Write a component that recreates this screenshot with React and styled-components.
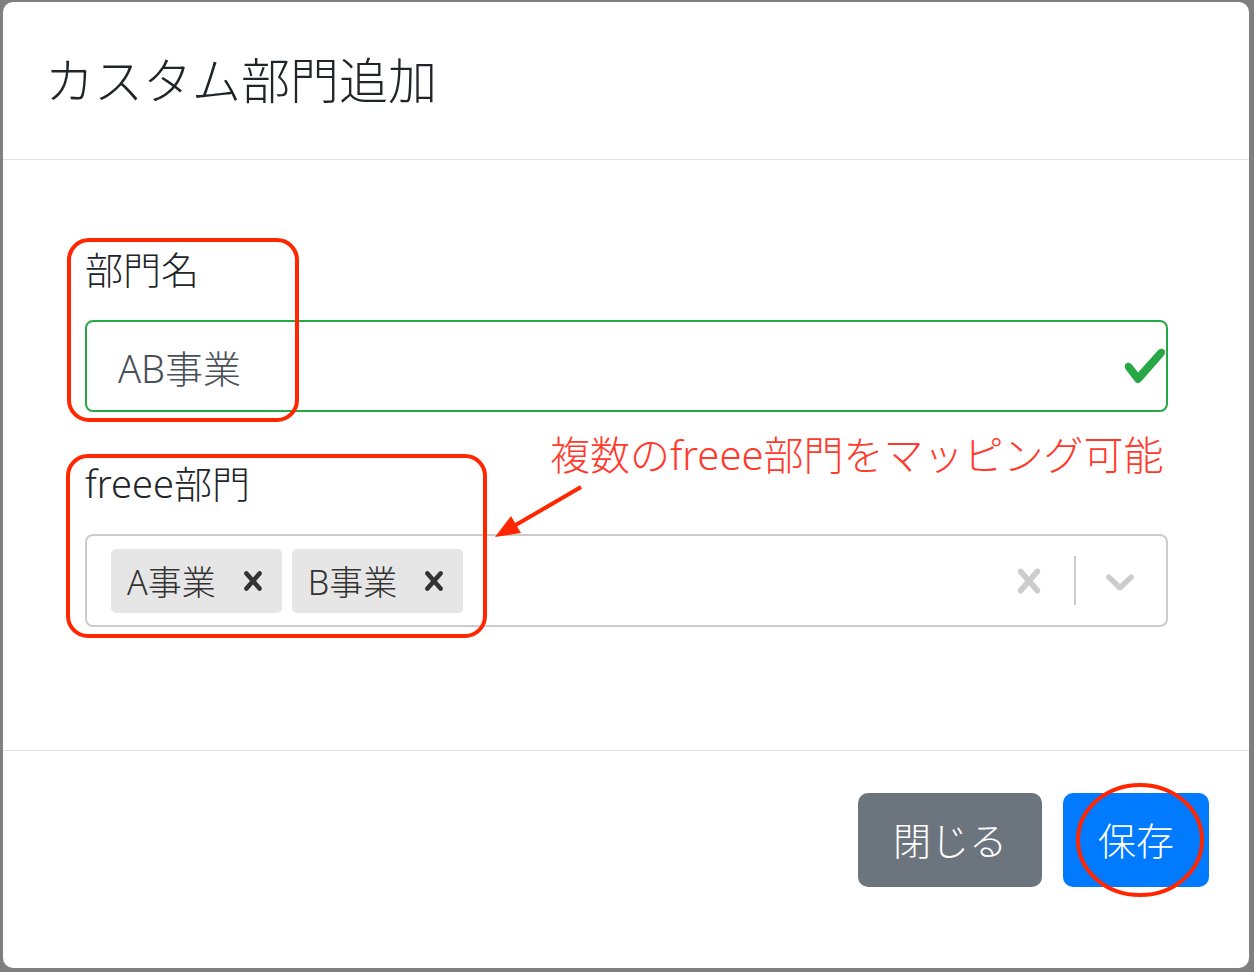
import styled, { createGlobalStyle } from "styled-components";

const GlobalStyle = createGlobalStyle`
  html, body {
    margin: 0;
    padding: 0;
  }
  body {
    background: #7f7f7f;
    font-family: "Noto Sans", "Noto Sans CJK JP", sans-serif;
    font-weight: 300;
    color: #212529;
  }
`;

const Page = styled.div`
  position: relative;
  width: 1254px;
  height: 972px;
  overflow: hidden;
`;

const Modal = styled.div`
  box-sizing: border-box;
  margin: 2px 0 0 3px;
  width: 1246px;
  height: 966px;
  background: #fff;
  border-radius: 10px;
  display: flex;
  flex-direction: column;
`;

const Header = styled.div`
  box-sizing: border-box;
  height: 158px;
  padding-left: 42px;
  display: flex;
  align-items: center;
  border-bottom: 1px solid #dee2e6;
`;

const Title = styled.h5`
  margin: 0;
  font-size: 49px;
  font-weight: 300;
  line-height: 1.2;
  color: #212529;
`;

const Body = styled.div`
  box-sizing: border-box;
  height: 590px;
  padding: 81px 81px 0 82px;
`;

const FormGroup = styled.div`
  margin-bottom: ${(p) => p.$gap || 0}px;
`;

const Label = styled.div`
  font-size: 38px;
  line-height: 57px;
  margin-bottom: 22px;
  color: #212529;
`;

const InputBox = styled.div`
  box-sizing: border-box;
  height: 92px;
  border: 2px solid #28a745;
  border-radius: 8px;
  padding: 0 0 0 31px;
  display: flex;
  align-items: center;
  justify-content: space-between;
  font-size: 38px;
  color: #495057;

  svg {
    margin-right: -2px;
  }
`;

const SelectBox = styled.div`
  box-sizing: border-box;
  height: 93px;
  border: 2px solid #cccccc;
  border-radius: 8px;
  padding-left: 24px;
  display: flex;
  align-items: center;
`;

const ValueList = styled.div`
  flex: 1;
  display: flex;
  gap: 10px;
`;

const Chip = styled.div`
  box-sizing: border-box;
  height: 64px;
  display: flex;
  align-items: center;
  background: #e6e6e6;
  border-radius: 5px;
  padding-left: 16px;
  font-size: 34px;
  color: #333;
`;

const ChipRemove = styled.span`
  display: flex;
  align-items: center;
  padding: 0 10px 0 18px;
  color: #333;
`;

const Indicator = styled.span`
  display: flex;
  align-items: center;
  padding: 0 ${(p) => p.$right || 21}px 0 ${(p) => p.$left || 21}px;
  color: #cccccc;
`;

const Separator = styled.span`
  width: 2px;
  height: 49px;
  background: #cccccc;
`;

const Footer = styled.div`
  box-sizing: border-box;
  flex: 1;
  border-top: 1px solid #dee2e6;
  display: flex;
  justify-content: flex-end;
  align-items: flex-start;
  gap: 21px;
  padding: 42px 40px 0 0;
`;

const Button = styled.button`
  box-sizing: border-box;
  height: 94px;
  padding: 0 ${(p) => p.$pad || 35}px;
  border: none;
  border-radius: 10px;
  background: ${(p) => (p.$primary ? "#007bff" : "#6c757d")};
  color: #fff;
  font-family: inherit;
  font-weight: 300;
  font-size: 38px;
  line-height: 1;
`;

const Markup = styled.svg`
  position: absolute;
  left: 0;
  top: 0;
  pointer-events: none;
`;

const Note = styled.div`
  position: absolute;
  left: 550px;
  top: 431px;
  font-size: 40px;
  line-height: 48px;
  color: #ff3a2c;
  white-space: nowrap;
`;

const Cross = ({ size, color }) => (
  <svg width={size} height={size} viewBox="0 0 20 20" fill={color}>
    <path d="M14.348 14.849c-0.469 0.469-1.229 0.469-1.697 0l-2.651-3.030-2.651 3.029c-0.469 0.469-1.229 0.469-1.697 0-0.469-0.469-0.469-1.229 0-1.697l2.758-3.15-2.759-3.152c-0.469-0.469-0.469-1.228 0-1.697s1.228-0.469 1.697 0l2.652 3.031 2.651-3.031c0.469-0.469 1.228-0.469 1.697 0s0.469 1.229 0 1.697l-2.758 3.152 2.758 3.15c0.469 0.469 0.469 1.229 0 1.698z" />
  </svg>
);

const Chevron = () => (
  <svg width="48" height="48" viewBox="0 0 20 20" fill="#cccccc">
    <path d="M4.516 7.548c0.436-0.446 1.043-0.481 1.576 0l3.908 3.747 3.908-3.747c0.533-0.481 1.141-0.446 1.574 0 0.436 0.445 0.408 1.197 0 1.615-0.406 0.418-4.695 4.502-4.695 4.502-0.217 0.223-0.502 0.335-0.787 0.335s-0.57-0.112-0.789-0.335c0 0-4.287-4.084-4.695-4.502s-0.436-1.17 0-1.615z" />
  </svg>
);

const Check = () => (
  <svg width="46" height="46" viewBox="0 0 8 8" fill="#28a745">
    <path d="M2.3 6.73L.6 4.53c-.4-1.04.46-1.4 1.1-.8l1.1 1.4 3.4-3.8c.6-.63 1.6-.27 1.2.7l-4 4.6c-.43.5-.8.4-1.1.1z" />
  </svg>
);

const departments = ["A事業", "B事業"];

export default function App() {
  return (
    <>
      <GlobalStyle />
      <Page>
        <Modal>
          <Header>
            <Title>カスタム部門追加</Title>
          </Header>
          <Body>
            <FormGroup $gap={43}>
              <Label>部門名</Label>
              <InputBox>
                <span>AB事業</span>
                <Check />
              </InputBox>
            </FormGroup>
            <FormGroup>
              <Label>freee部門</Label>
              <SelectBox>
                <ValueList>
                  {departments.map((d) => (
                    <Chip key={d}>
                      {d}
                      <ChipRemove>
                        <Cross size={38} color="#333" />
                      </ChipRemove>
                    </Chip>
                  ))}
                </ValueList>
                <Indicator $left={21} $right={21}>
                  <Cross size={48} color="#cccccc" />
                </Indicator>
                <Separator />
                <Indicator $left={20} $right={22}>
                  <Chevron />
                </Indicator>
              </SelectBox>
            </FormGroup>
          </Body>
          <Footer>
            <Button>閉じる</Button>
            <Button $primary>保存</Button>
          </Footer>
        </Modal>

        <Markup width="1254" height="972" viewBox="0 0 1254 972">
          <g fill="none" stroke="#ff2600" strokeWidth="4">
            <rect x="69" y="240" width="228" height="180" rx="20" />
            <rect x="68" y="456" width="417" height="180" rx="20" />
            <line x1="581" y1="487" x2="514" y2="526" />
            <ellipse cx="1140" cy="840" rx="62" ry="55" />
          </g>
          <polygon points="495,537 521,533 511,516" fill="#ff2600" />
        </Markup>
        <Note>複数のfreee部門をマッピング可能</Note>
      </Page>
    </>
  );
}
